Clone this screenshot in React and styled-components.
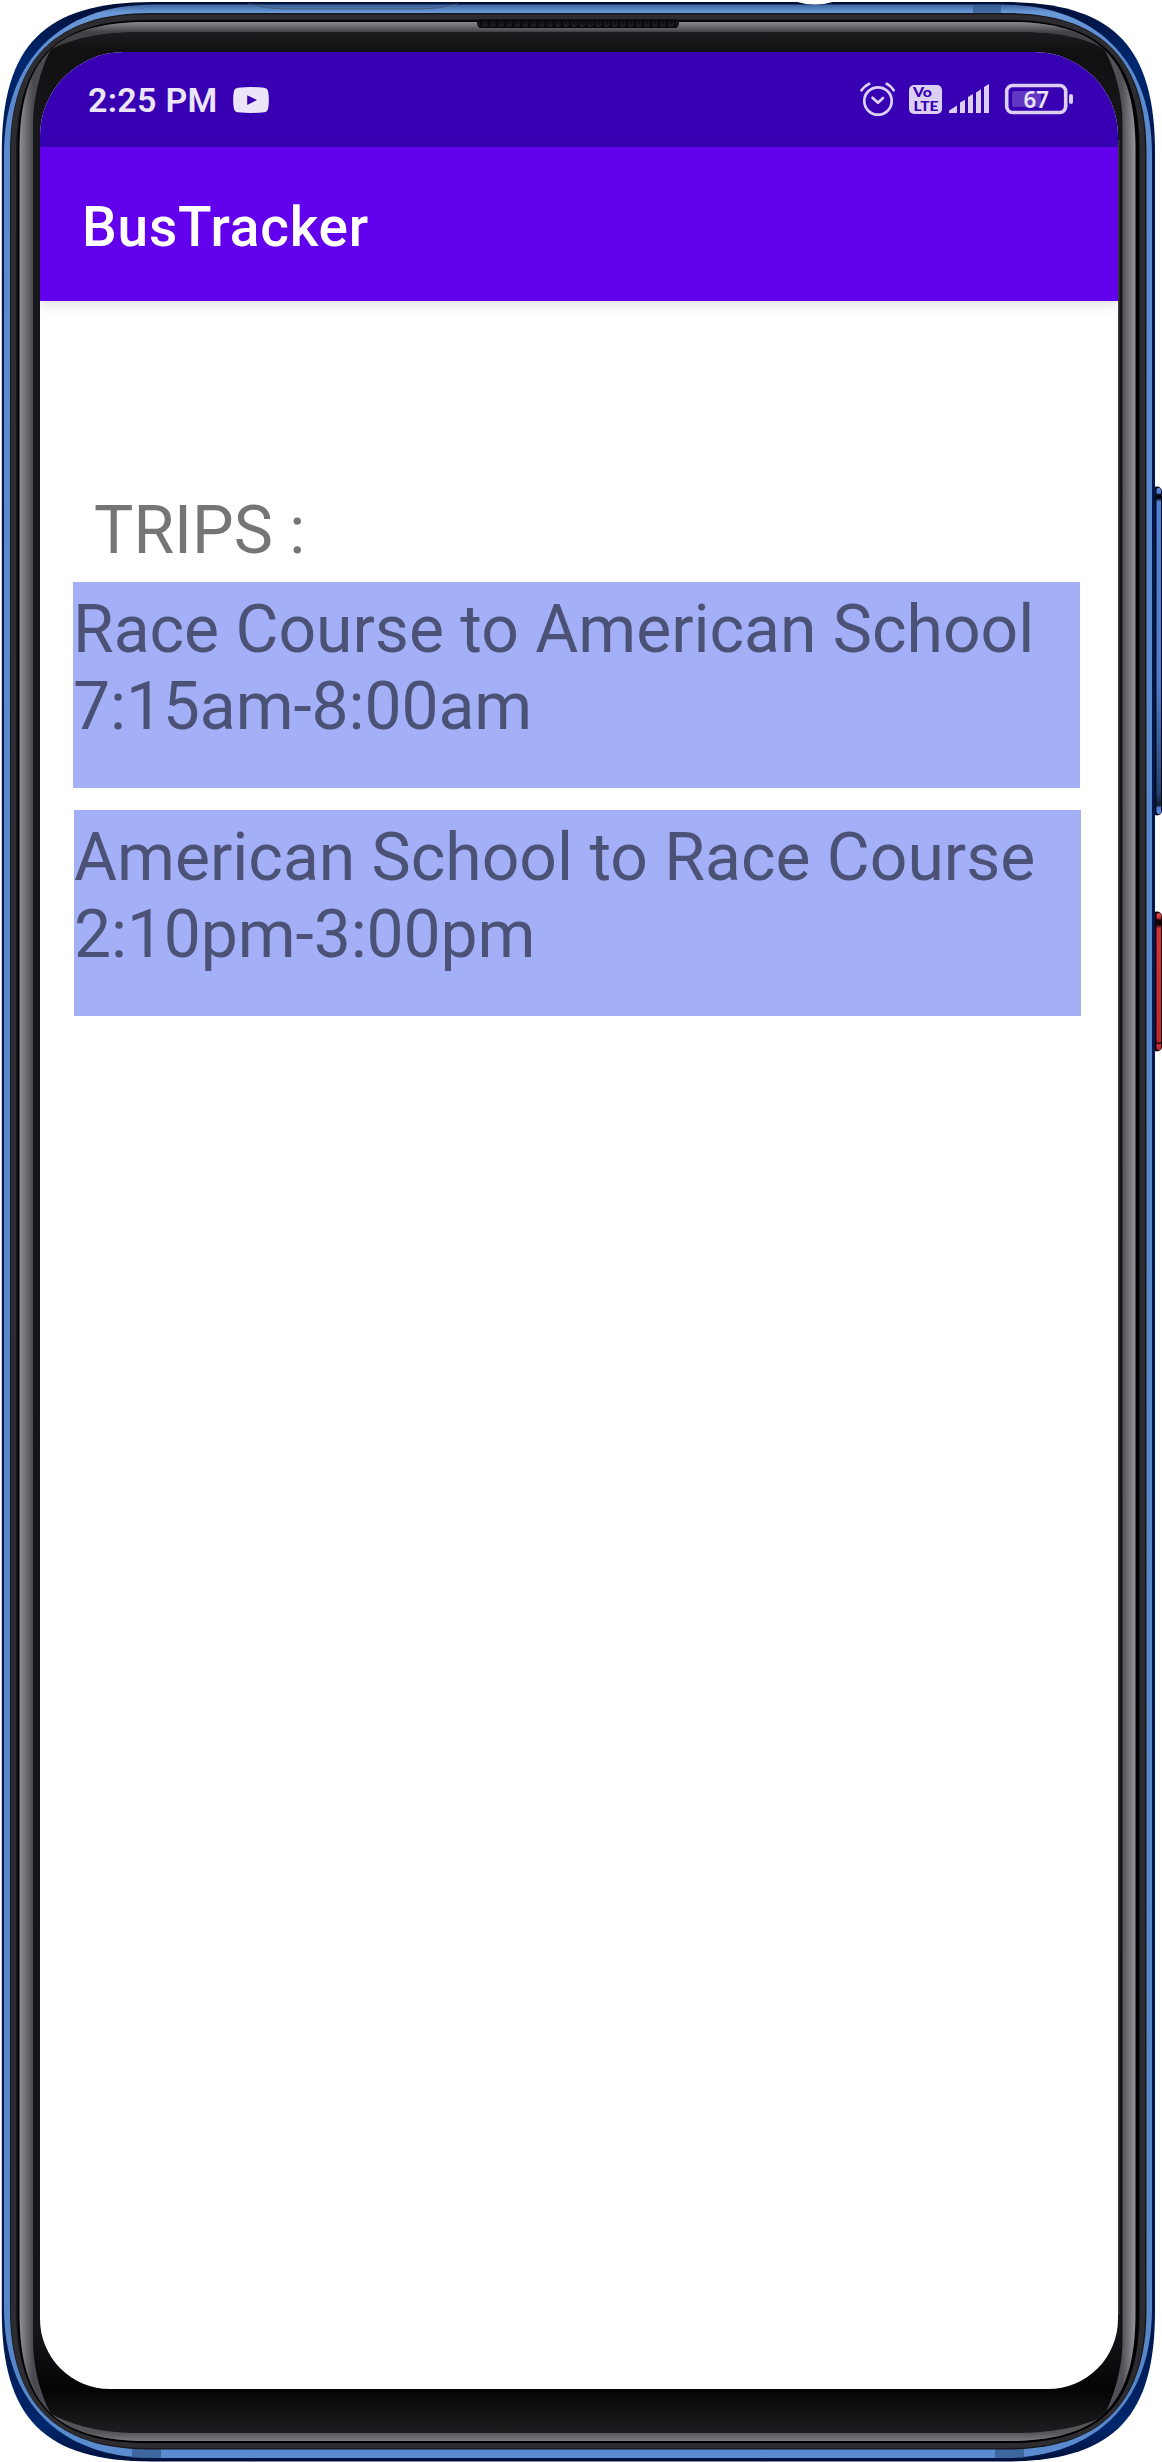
import React from "react";
import styled, { createGlobalStyle } from "styled-components";

const Global = createGlobalStyle`
  *, *::before, *::after { box-sizing: border-box; }
  body { margin: 0; background: #fff; font-family: Roboto, "Liberation Sans", sans-serif; }
`;

const Phone = styled.main`
  position: relative;
  width: 1162px;
  height: 2462px;
  padding: 52px 44px 73px 40px;
  overflow: hidden;
  background: #fff;
`;

const Hardware = styled.svg`
  position: absolute;
  inset: 0;
  pointer-events: none;
`;

const Screen = styled.div`
  position: relative;
  display: flex;
  flex-direction: column;
  height: 100%;
  overflow: hidden;
  background: #fff;
  border-radius: 84px 84px 70px 70px;
`;

const StatusBar = styled.header`
  flex: none;
  display: flex;
  align-items: center;
  justify-content: space-between;
  height: 95px;
  padding: 0 43px 0 48px;
  background: #3700b3;
  color: #ebe5f7;
`;

const StatusGroup = styled.div`
  display: flex;
  align-items: center;
  gap: ${({ $gap }) => $gap}px;
`;

const Clock = styled.span`
  font-size: 34px;
  line-height: 40px;
  font-weight: 600;
  letter-spacing: 0.3px;
`;

const Icon = styled.svg`
  display: block;
  flex: none;
`;

const AppBar = styled.div`
  flex: none;
  display: flex;
  align-items: center;
  height: 154px;
  padding: 6px 42px 0;
  background: #6200ee;
  box-shadow: 0 3px 12px rgba(0, 0, 0, 0.14);
`;

const Title = styled.h1`
  margin: 0;
  color: #fff;
  font-size: 55px;
  line-height: 64px;
  font-weight: 500;
  letter-spacing: 0.8px;
`;

const Content = styled.section`
  display: flex;
  flex-direction: column;
  padding: 191px 38px 0 33px;
`;

const Heading = styled.h2`
  margin: 0 0 13px 21px;
  color: #757575;
  font-size: 66px;
  line-height: 77px;
  font-weight: 400;
`;

const TripList = styled.ul`
  display: flex;
  flex-direction: column;
  gap: 22px;
  margin: 0;
  padding: 0;
  list-style: none;
`;

const Trip = styled.li`
  width: 1007px;
  height: 206px;
  margin-left: ${({ $indent }) => $indent}px;
  padding-top: 9px;
  background: #a3b0f8;
  color: #4b5275;
  font-size: 66px;
  line-height: 77px;
  white-space: nowrap;
`;

const TripLine = styled.div`
  letter-spacing: ${({ $spacing = 0 }) => $spacing}px;
`;

const trips = [
  { route: "Race Course to American School", time: "7:15am-8:00am" },
  { route: "American School to Race Course", time: "2:10pm-3:00pm" },
];

/* Closed outline with soft corners: l is the corner run, a the control offset. */
function shell(x0, y0, x1, y1, l, a) {
  return [
    `M${x0} ${y0 + l}`,
    `C${x0} ${y0 + a} ${x0 + a} ${y0} ${x0 + l} ${y0}`,
    `H${x1 - l}`,
    `C${x1 - a} ${y0} ${x1} ${y0 + a} ${x1} ${y0 + l}`,
    `V${y1 - l}`,
    `C${x1} ${y1 - a} ${x1 - a} ${y1} ${x1 - l} ${y1}`,
    `H${x0 + l}`,
    `C${x0 + a} ${y1} ${x0} ${y1 - a} ${x0} ${y1 - l}`,
    "Z",
  ].join(" ");
}

const glass =
  "M33 125 C33 95 42 66 51 49 C75 38 100 32 140 32 H1017 C1060 32 1085 38 1104 49 C1115 68 1122.5 95 1122.5 125 " +
  "V2340 C1122.5 2370 1113 2398 1104 2416 C1080 2428 1050 2433 1017 2433 H140 C100 2433 75 2426 51 2414 C42 2398 33 2370 33 2340 Z";

function PhoneBody() {
  return (
    <Hardware width="1162" height="2462" viewBox="0 0 1162 2462" aria-hidden="true">
      <defs>
        <linearGradient id="rimLight" x1="0" y1="4" x2="0" y2="2458" gradientUnits="userSpaceOnUse">
          <stop offset="0" stopColor="#3b619b" />
          <stop offset="0.0035" stopColor="#6a99d8" />
          <stop offset="0.02" stopColor="#5b8bce" />
          <stop offset="0.97" stopColor="#5686c8" />
          <stop offset="1" stopColor="#5b8bd0" />
        </linearGradient>
        <linearGradient id="rimDark" x1="0" y1="0" x2="0" y2="2462" gradientUnits="userSpaceOnUse">
          <stop offset="0" stopColor="#000d33" />
          <stop offset="0.025" stopColor="#002870" />
          <stop offset="0.06" stopColor="#00184e" />
          <stop offset="0.95" stopColor="#00184e" />
          <stop offset="0.985" stopColor="#00276d" />
          <stop offset="1" stopColor="#00103c" />
        </linearGradient>
        <linearGradient id="greyLeft" x1="19" y1="0" x2="33" y2="0" gradientUnits="userSpaceOnUse">
          <stop offset="0" stopColor="#929196" />
          <stop offset="1" stopColor="#4a4a50" />
        </linearGradient>
        <linearGradient id="greyRight" x1="1122" y1="0" x2="1135" y2="0" gradientUnits="userSpaceOnUse">
          <stop offset="0" stopColor="#505056" />
          <stop offset="1" stopColor="#929196" />
        </linearGradient>
        <linearGradient id="greyTop" x1="0" y1="22" x2="0" y2="32" gradientUnits="userSpaceOnUse">
          <stop offset="0" stopColor="#8b8b8e" />
          <stop offset="1" stopColor="#424247" />
        </linearGradient>
        <linearGradient id="greyBottom" x1="0" y1="2433" x2="0" y2="2441" gradientUnits="userSpaceOnUse">
          <stop offset="0" stopColor="#55555a" />
          <stop offset="1" stopColor="#7b7c7f" />
        </linearGradient>
        <linearGradient id="glassFill" x1="0" y1="32" x2="0" y2="2433" gradientUnits="userSpaceOnUse">
          <stop offset="0" stopColor="#1d1c20" />
          <stop offset="0.0083" stopColor="#101011" />
          <stop offset="0.04" stopColor="#17161b" />
          <stop offset="0.96" stopColor="#141317" />
          <stop offset="0.982" stopColor="#040405" />
          <stop offset="1" stopColor="#1e1d21" />
        </linearGradient>
        <linearGradient id="volume" x1="0" y1="487" x2="0" y2="816" gradientUnits="userSpaceOnUse">
          <stop offset="0" stopColor="#5b8be0" />
          <stop offset="0.018" stopColor="#4f7fdb" />
          <stop offset="0.024" stopColor="#05080f" />
          <stop offset="0.034" stopColor="#05080f" />
          <stop offset="0.045" stopColor="#4f80d8" />
          <stop offset="0.6" stopColor="#4d7cce" />
          <stop offset="0.93" stopColor="#26436f" />
          <stop offset="0.967" stopColor="#101c30" />
          <stop offset="0.975" stopColor="#4f80d8" />
          <stop offset="1" stopColor="#5a8de8" />
        </linearGradient>
        <linearGradient id="power" x1="0" y1="912" x2="0" y2="1051" gradientUnits="userSpaceOnUse">
          <stop offset="0" stopColor="#e4434a" />
          <stop offset="0.04" stopColor="#d8383f" />
          <stop offset="0.06" stopColor="#180405" />
          <stop offset="0.09" stopColor="#180405" />
          <stop offset="0.12" stopColor="#d5333c" />
          <stop offset="0.93" stopColor="#bd2930" />
          <stop offset="0.945" stopColor="#2a0709" />
          <stop offset="0.955" stopColor="#d5333c" />
          <stop offset="1" stopColor="#b0262c" />
        </linearGradient>
        <pattern id="mesh" x="481" y="18" width="8.1" height="11" patternUnits="userSpaceOnUse">
          <rect width="8.1" height="11" fill="#09090b" />
          <circle cx="4" cy="6" r="3" fill="#1f1f22" />
          <circle cx="4" cy="4.8" r="2" fill="#111114" />
        </pattern>
        <clipPath id="greyRing">
          <path d={shell(19.5, 22, 1135.5, 2441, 128, 36)} />
        </clipPath>
      </defs>

      <rect x="1152" y="486.5" width="10" height="329" rx="5" fill="#060a14" />
      <rect x="1156.5" y="488" width="4.5" height="326" rx="2" fill="url(#volume)" />
      <rect x="1152" y="911.5" width="10" height="140" rx="5" fill="#120405" />
      <rect x="1156.5" y="913" width="4.5" height="137" rx="2" fill="url(#power)" />

      <path d={shell(1.8, 2, 1155, 2461.5, 150, 43)} fill="url(#rimDark)" />
      <path d={shell(4, 4.5, 1152, 2458, 150, 56)} fill="url(#rimLight)" />
      <path d="M248 3.5 Q266 9 285 9 H421 Q440 9 458 3.5" fill="#33507f" fillOpacity="0.25" stroke="#46526b" strokeOpacity="0.7" />
      <rect x="973" y="4.5" width="28" height="9" fill="#2f5485" fillOpacity="0.65" />
      <rect x="132" y="2449" width="29" height="9" fill="#2f5485" fillOpacity="0.65" />
      <rect x="995" y="2449" width="29" height="9" fill="#2f5485" fillOpacity="0.65" />
      <path d="M795 1.5 Q815 7.5 835 1.5 Z" fill="#fff" />

      <path d={shell(10, 13, 1146.5, 2449.5, 140, 46)} fill="#17171a" />
      <path d={shell(13.5, 17, 1142.5, 2445.5, 134, 43)} fill="none" stroke="#2d2d31" strokeWidth="5" />
      <path d={shell(17.5, 20.5, 1139, 2443, 130, 38)} fill="#020203" />
      <g clipPath="url(#greyRing)">
        <rect x="19" y="20" width="560" height="2424" fill="url(#greyLeft)" />
        <rect x="579" y="20" width="560" height="2424" fill="url(#greyRight)" />
        <path d="M50 49 L19 19 H1138 L1105 49 Z" fill="url(#greyTop)" />
        <path d="M50 2414 L19 2444 H1138 L1105 2416 Z" fill="url(#greyBottom)" />
        <path d={glass} fill="url(#glassFill)" />
      </g>
      <path d="M1118.8 140 V2315" stroke="#4a4b50" strokeWidth="1" />
      <rect x="477" y="19.5" width="202" height="8.5" rx="4.2" fill="url(#mesh)" />
    </Hardware>
  );
}

function VideoIcon() {
  return (
    <Icon width="36" height="26" viewBox="0 0 36 26">
      <path
        d="M5 .7Q18-.6 31 .7Q34.7 1 35.2 5Q36.6 13 35.2 21Q34.7 25 31 25.3Q18 26.6 5 25.3Q1.3 25 .8 21Q-.6 13 .8 5Q1.3 1 5 .7Z"
        fill="#ebe5f7"
      />
      <path d="M14.2 8.2V18L24 13.1Z" fill="#3700b3" />
    </Icon>
  );
}

function SystemIcons() {
  return (
    <Icon width="216" height="38" viewBox="859 81 216 38">
      <g fill="none" stroke="#dccff4" strokeWidth="2.7" strokeLinecap="round" strokeLinejoin="round">
        <circle cx="878" cy="101" r="13.7" />
        <path d="M872.5 97.8L878 102.8L883 98" />
        <path d="M861.5 90.3Q864.5 86 869.2 83.8M893.7 90.3Q891 86 886.7 83.8" />
      </g>
      <rect x="909" y="85" width="33" height="29" rx="5" fill="#dccff4" />
      <g fill="#3700b3" fontFamily="Lato, sans-serif" fontWeight="900">
        <text x="913" y="97.4" fontSize="13.5" textLength="19" lengthAdjust="spacingAndGlyphs">Vo</text>
        <text x="913.5" y="110.6" fontSize="13.5" textLength="25" lengthAdjust="spacingAndGlyphs">LTE</text>
      </g>
      <g fill="#dccff4">
        <path d="M949 113V110.5L957 105.5V113Z" />
        <path d="M960 113V102.5L965 99.8V113Z" />
        <path d="M968 113V97L973 94V113Z" />
        <path d="M976 113V92.5L981 89.3V113Z" />
        <path d="M984 113V87L989 84V113Z" />
        <rect x="1069" y="94" width="4" height="10" rx="2" />
      </g>
      <rect x="1006.7" y="85.5" width="59" height="27" rx="6" fill="none" stroke="#dccff4" strokeWidth="3.6" />
      <rect x="1012" y="91" width="29" height="16" rx="2.5" fill="#6236c4" />
      <text
        x="1023.5"
        y="108"
        fontFamily="'Noto Sans', sans-serif"
        fontWeight="600"
        fontSize="23"
        textLength="25.5"
        lengthAdjust="spacingAndGlyphs"
        fill="#ebe5f7"
      >
        67
      </text>
    </Icon>
  );
}

export default function App() {
  return (
    <>
      <Global />
      <Phone>
        <PhoneBody />
        <Screen>
          <StatusBar>
            <StatusGroup $gap={15}>
              <Clock>2:25 PM</Clock>
              <VideoIcon />
            </StatusGroup>
            <SystemIcons />
          </StatusBar>
          <AppBar>
            <Title>BusTracker</Title>
          </AppBar>
          <Content>
            <Heading>TRIPS :</Heading>
            <TripList>
              {trips.map((trip, i) => (
                <Trip key={trip.route} $indent={i}>
                  <TripLine>{trip.route}</TripLine>
                  <TripLine $spacing={-0.1}>{trip.time}</TripLine>
                </Trip>
              ))}
            </TripList>
          </Content>
        </Screen>
      </Phone>
    </>
  );
}
